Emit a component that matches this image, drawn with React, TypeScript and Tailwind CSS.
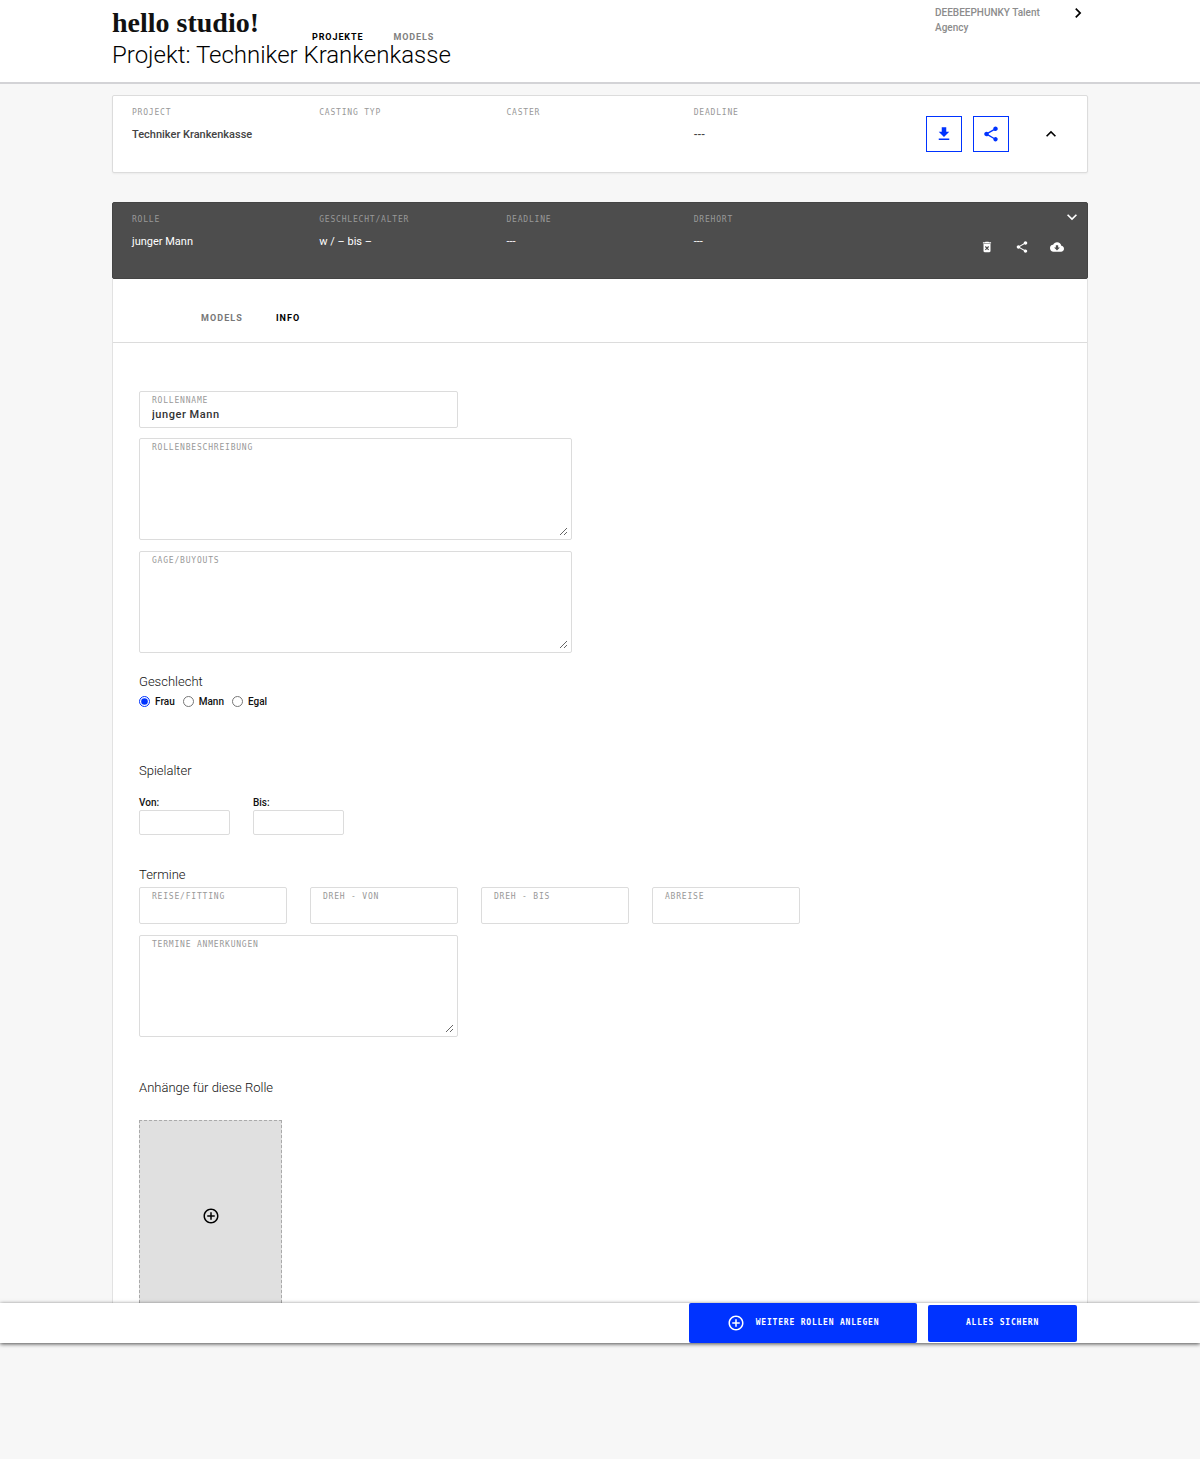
import React, { useState } from 'react';
import {
  MdAddCircleOutline,
  MdCloudDownload,
  MdDeleteForever,
  MdFileDownload,
  MdKeyboardArrowDown,
  MdKeyboardArrowRight,
  MdKeyboardArrowUp,
  MdShare
} from 'react-icons/md';

const projectFacts = [
  { label: 'Project', value: 'Techniker Krankenkasse' },
  { label: 'Casting Typ', value: '' },
  { label: 'Caster', value: '' },
  { label: 'Deadline', value: '---' }
];

const roleFacts = [
  { label: 'Rolle', value: 'junger Mann' },
  { label: 'Geschlecht/Alter', value: 'w / – bis –' },
  { label: 'Deadline', value: '---' },
  { label: 'Drehort', value: '---' }
];

const dates = [
  { id: 'reise', label: 'Reise/Fitting' },
  { id: 'dreh-von', label: 'Dreh - Von' },
  { id: 'dreh-bis', label: 'Dreh - Bis' },
  { id: 'abreise', label: 'Abreise' }
];

const genders = ['Frau', 'Mann', 'Egal'];

type Fact = { label: string; value: string };

const Facts = ({ items, dark = false }: { items: Fact[]; dark?: boolean }) => (
  <dl className="grid flex-1 grid-cols-4 pl-[19px] pt-[11px]">
    {items.map((item) => (
      <div key={item.label}>
        <dt className="font-['DejaVu_Sans_Mono',monospace] text-[8px] leading-3 tracking-widest uppercase text-[#999]">
          {item.label}
        </dt>
        <dd className={dark ? 'mt-2 text-[11px] leading-4 text-white' : 'mt-2 text-[11px] leading-4 font-medium text-[#444]'}>
          {item.value}
        </dd>
      </div>
    ))}
  </dl>
);

const fieldBox = 'rounded-xs border border-[#dcdcdc] bg-white';
const fieldLabel = "block pl-3 font-['DejaVu_Sans_Mono',monospace] text-[8px] leading-3 tracking-widest uppercase text-[#999]";

const TextField = ({ id, label, value = '' }: { id: string; label: string; value?: string }) => (
  <div className={`${fieldBox} h-[37px] pt-[3px]`}>
    <label htmlFor={id} className={fieldLabel}>{label}</label>
    <input
      id={id}
      type="text"
      defaultValue={value}
      className="block h-4 w-full bg-transparent px-3 text-[11px] font-medium tracking-wider text-[#333] outline-none"
    />
  </div>
);

const TextArea = ({ id, label }: { id: string; label: string }) => (
  <div className={`${fieldBox} pt-[3px] pr-[3px] pb-[3px]`}>
    <label htmlFor={id} className={fieldLabel}>{label}</label>
    <textarea
      id={id}
      className="block h-[82px] w-full resize-y bg-transparent px-3 text-[11px] font-medium text-[#333] outline-none"
    />
  </div>
);

const SectionTitle = ({ children }: { children: React.ReactNode }) => (
  <h2 className="text-[13px] leading-[18px] font-light text-[#111]">{children}</h2>
);

const Header = () => (
  <header className="border-b-2 border-[#d3d3d6] bg-white px-28 pb-3">
    <div className="flex h-10 items-start">
      <a href="#" className="w-[200px] pt-2 font-['Liberation_Serif',serif] text-[28px] leading-[30px] font-bold text-[#111]">
        hello studio!
      </a>
      <nav className="flex flex-1 gap-[30px] pt-[31px] text-[9px] leading-3 font-bold tracking-widest uppercase">
        <a href="#" className="text-black">Projekte</a>
        <a href="#" className="text-[#808080]">Models</a>
      </nav>
      <p className="w-[133px] pt-[5px] pr-5 text-[10px] leading-[15px] font-medium text-[#8c8c8c]">
        DEEBEEPHUNKY Talent Agency
      </p>
      <button aria-label="Konto" className="pt-[3px]">
        <MdKeyboardArrowRight className="h-5 w-5" />
      </button>
    </div>
    <h1 className="text-2xl leading-[30px] font-light text-black">Projekt: Techniker Krankenkasse</h1>
  </header>
);

const ProjectCard = () => (
  <section className="flex h-[78px] rounded-xs border border-[#dcdcdc] bg-white shadow-xs">
    <Facts items={projectFacts} />
    <div className="flex w-[206px] items-center justify-end pr-[26px]">
      <button aria-label="Herunterladen" className="mr-[11px] flex h-9 w-9 items-center justify-center border border-[#0033ff] text-[#0033ff]">
        <MdFileDownload className="h-[18px] w-[18px]" />
      </button>
      <button aria-label="Teilen" className="mr-8 flex h-9 w-9 items-center justify-center border border-[#0033ff] text-[#0033ff]">
        <MdShare className="h-[18px] w-[18px]" />
      </button>
      <button aria-label="Projekt einklappen">
        <MdKeyboardArrowUp className="h-5 w-5" />
      </button>
    </div>
  </section>
);

const RoleHeader = () => (
  <div className="flex h-[77px] rounded-xs border border-[#444] bg-[#4d4d4d]">
    <Facts items={roleFacts} dark />
    <div className="flex w-[206px] flex-col items-end gap-[13px] pt-1 pr-[5px] text-white">
      <button aria-label="Rolle ausklappen">
        <MdKeyboardArrowDown className="h-5 w-5" />
      </button>
      <div className="flex gap-[21px] pr-[18px]">
        <button aria-label="Rolle löschen"><MdDeleteForever className="h-[14px] w-[14px]" /></button>
        <button aria-label="Rolle teilen"><MdShare className="h-[14px] w-[14px]" /></button>
        <button aria-label="Rolle herunterladen"><MdCloudDownload className="h-[14px] w-[14px]" /></button>
      </div>
    </div>
  </div>
);

const RoleForm = () => {
  const [gender, setGender] = useState('Frau');

  return (
    <form className="px-[26px] pt-12">
      <div className="max-w-[319px]">
        <TextField id="rollenname" label="Rollenname" value="junger Mann" />
      </div>
      <div className="mt-[10px] flex max-w-[433px] flex-col gap-[11px]">
        <TextArea id="beschreibung" label="Rollenbeschreibung" />
        <TextArea id="gage" label="Gage/Buyouts" />
      </div>

      <div className="mt-5">
        <SectionTitle>Geschlecht</SectionTitle>
        <div className="mt-[3px] flex gap-2">
          {genders.map((name) => (
            <label key={name} className="flex items-start gap-[5px] text-[10px] leading-4 font-medium text-[#111]">
              <input
                type="radio"
                name="geschlecht"
                checked={gender === name}
                onChange={() => setGender(name)}
                className="mt-0.5 h-[11px] w-[11px] accent-[#0033ff]"
              />
              {name}
            </label>
          ))}
        </div>
      </div>

      <div className="mt-[52px]">
        <SectionTitle>Spielalter</SectionTitle>
        <div className="mt-4 flex gap-[23px] text-[10px] leading-[14px] font-medium text-[#111]">
          {['Von', 'Bis'].map((name) => (
            <div key={name} className="w-[91px]">
              <label htmlFor={name} className="block">{name}:</label>
              <input id={name} type="text" className={`${fieldBox} block h-[25px] w-full px-2 outline-none`} />
            </div>
          ))}
        </div>
      </div>

      <div className="mt-[31px]">
        <SectionTitle>Termine</SectionTitle>
        <div className="mt-[3px] grid max-w-[661px] grid-cols-4 gap-x-[23px] gap-y-[11px]">
          {dates.map((date) => (
            <TextField key={date.id} id={date.id} label={date.label} />
          ))}
          <div className="col-span-2">
            <TextArea id="anmerkungen" label="Termine Anmerkungen" />
          </div>
        </div>
      </div>

      <div className="mt-[42px]">
        <SectionTitle>Anhänge für diese Rolle</SectionTitle>
        <button
          type="button"
          aria-label="Anhang hinzufügen"
          className="mt-[23px] flex h-[183px] w-[143px] items-center justify-center border border-b-0 border-dashed border-[#aaa] bg-[#e0e0e0] pt-2"
        >
          <MdAddCircleOutline className="h-[18px] w-[18px]" />
        </button>
      </div>
    </form>
  );
};

const ActionBar = () => (
  <footer className="relative flex items-center justify-end gap-[11px] bg-white pr-[123px] font-['DejaVu_Sans_Mono',monospace] text-[8px] leading-3 tracking-widest text-white uppercase shadow-[0_1px_4px_rgba(0,0,0,0.7)]">
    <button className="flex h-10 w-[228px] items-center justify-center gap-[11px] rounded-xs bg-[#0033ff] font-bold uppercase">
      <MdAddCircleOutline className="h-[18px] w-[18px]" />
      Weitere Rollen anlegen
    </button>
    <button className="h-[37px] w-[149px] rounded-xs bg-[#0033ff] font-bold uppercase">Alles sichern</button>
  </footer>
);

const App = () => {
  return (
    <div className="min-h-screen bg-[#f7f7f7] font-['Roboto',sans-serif] text-black">
      <Header />
      <main className="px-28 pt-[11px]">
        <ProjectCard />
        <section className="mt-[29px]">
          <RoleHeader />
          <div className="border-x border-[#e2e2e2] bg-white">
            <div className="flex h-16 gap-[33px] border-b border-[#dcdcdc] pt-[33px] pl-[88px] text-[9px] leading-3 font-bold tracking-[0.12em]">
              <button className="self-start text-[#777] uppercase">Models</button>
              <button className="self-start text-black uppercase">Info</button>
            </div>
            <RoleForm />
          </div>
        </section>
      </main>
      <ActionBar />
    </div>
  );
};

export default App;
